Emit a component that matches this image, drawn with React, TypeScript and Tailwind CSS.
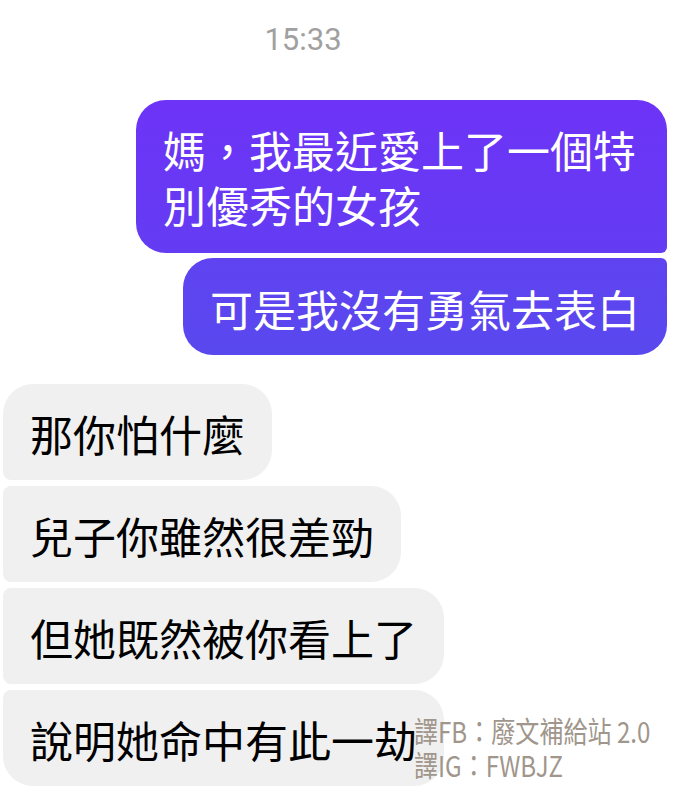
import React from "react";

const cjk = { fontFamily: '"Noto Sans CJK TC", "Noto Sans", sans-serif' };

export default function App() {
  return (
    <div className="relative w-[675px] h-[800px] bg-white overflow-hidden" style={cjk}>
      <div
        className="w-[606px] pt-[22px] text-center text-[31px] leading-[36px] text-[#a0a0a0]"
        style={{ fontFamily: 'Roboto, "Liberation Sans", sans-serif' }}
      >
        15:33
      </div>

      <div className="mt-[42px] flex flex-col items-end gap-[5px] pr-[8px]">
        <div className="max-w-[531px] rounded-[30px] rounded-br-[6px] bg-gradient-to-b from-[#6d33f7] to-[#643cf3] pl-[27px] pr-[27px] pt-[22px] pb-[21px] text-[43px] leading-[55px] text-white">
          媽，我最近愛上了一個特別優秀的女孩
        </div>
        <div className="rounded-[30px] rounded-tr-[6px] bg-gradient-to-b from-[#5f43f1] to-[#5948ee] pl-[27px] pr-[27px] pt-[23px] pb-[19px] text-[43px] leading-[55px] text-white whitespace-nowrap">
          可是我沒有勇氣去表白
        </div>
      </div>

      <div className="mt-[29px] flex flex-col items-start gap-[6px] pl-[3px]">
        <div className="rounded-[30px] rounded-bl-[8px] bg-[#f0f0f0] px-[27px] pt-[22px] pb-[19px] text-[43px] leading-[55px] text-black whitespace-nowrap">
          那你怕什麼
        </div>
        <div className="rounded-[30px] rounded-l-[8px] bg-[#f0f0f0] px-[27px] pt-[22px] pb-[19px] text-[43px] leading-[55px] text-black whitespace-nowrap">
          兒子你雖然很差勁
        </div>
        <div className="rounded-[30px] rounded-l-[8px] bg-[#f0f0f0] px-[27px] pt-[22px] pb-[19px] text-[43px] leading-[55px] text-black whitespace-nowrap">
          但她既然被你看上了
        </div>
        <div className="rounded-[30px] rounded-tl-[8px] bg-[#f0f0f0] px-[27px] pt-[22px] pb-[19px] text-[43px] leading-[55px] text-black whitespace-nowrap">
          說明她命中有此一劫
        </div>
      </div>

      <div className="absolute left-[414px] top-[713px] flex flex-col origin-left scale-x-[0.83] text-[29px] leading-[34px] text-[#a0968c] whitespace-nowrap">
        <div>譯FB：廢文補給站 2.0</div>
        <div>譯IG：FWBJZ</div>
      </div>
    </div>
  );
}
